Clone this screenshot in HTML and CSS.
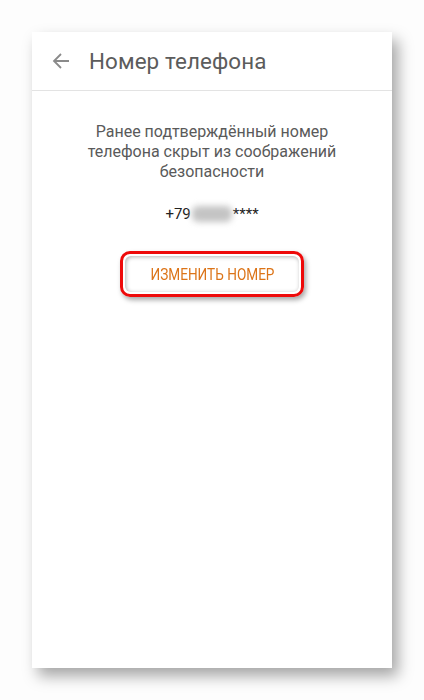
FILE: index.html
```html
<!DOCTYPE html>
<html lang="ru">
<head>
<meta charset="utf-8">
<link rel="stylesheet" href="styles.css">
</head>
<body>
<div class="page">
  <div class="card">
    <div class="header">
      <svg class="back" width="18" height="16" viewBox="0 0 18 16">
        <path d="M9 1 L2 8 L9 15 M2 8 H17" fill="none" stroke="#8a8a8a" stroke-width="1.8"/>
      </svg>
      <div class="title">Номер телефона</div>
    </div>
    <div class="content">
      <p class="info">Ранее подтверждённый номер телефона скрыт из соображений безопасности</p>
      <div class="phone">+79<span class="blur"></span>****</div>
      <div class="btn-wrap">
        <div class="btn"><span class="btn-label">ИЗМЕНИТЬ НОМЕР</span></div>
      </div>
    </div>
  </div>
</div>
</body>
</html>
```
FILE: styles.css
```css
html, body {
  margin: 0;
  padding: 0;
  background: #fdfdfd;
}
.page {
  width: 424px;
  height: 700px;
  padding: 32px 0 0 32px;
  box-sizing: border-box;
}
.card {
  width: 360px;
  height: 636px;
  background: #fff;
  box-shadow: 6px 8px 14px rgba(0,0,0,0.35);
  font-family: Roboto, "Noto Sans", sans-serif;
}
.header {
  height: 58px;
  border-bottom: 1px solid #e3e3e3;
  display: flex;
  align-items: center;
}
.back {
  margin-left: 20px;
  margin-right: 19px;
}
.title {
  font-size: 22.4px;
  color: #5c5c5c;
  letter-spacing: 0.1px;
}
.content {
  display: flex;
  flex-direction: column;
  align-items: center;
  padding-top: 31px;
}
.info {
  margin: 0;
  width: 260px;
  text-align: center;
  font-size: 16px;
  line-height: 20px;
  color: #5a5a5a;
}
.phone {
  margin-top: 23px;
  font-size: 15px;
  color: #222;
  display: flex;
  align-items: center;
  height: 18px;
}
.blur {
  display: inline-block;
  width: 40px;
  height: 16px;
  background: #c4c4c4;
  filter: blur(3px);
  border-radius: 6px;
  margin: 0 1px 0 1px;
}
.btn-wrap {
  margin-top: 28px;
  border: 3px solid #ee0a0a;
  border-radius: 10px;
  padding: 2px;
  box-shadow: 2px 3px 5px rgba(0,0,0,0.35);
}
.btn {
  width: 174px;
  height: 36px;
  border-radius: 6px;
  box-shadow: inset 1px 1px 4px rgba(0,0,0,0.3);
  display: flex;
  align-items: center;
  justify-content: center;
}
.btn-label {
  display: inline-block;
  font-family: Roboto, sans-serif;
  font-size: 17px;
  color: #dc7418;
  transform: scaleX(0.8);
  white-space: nowrap;
}
```
